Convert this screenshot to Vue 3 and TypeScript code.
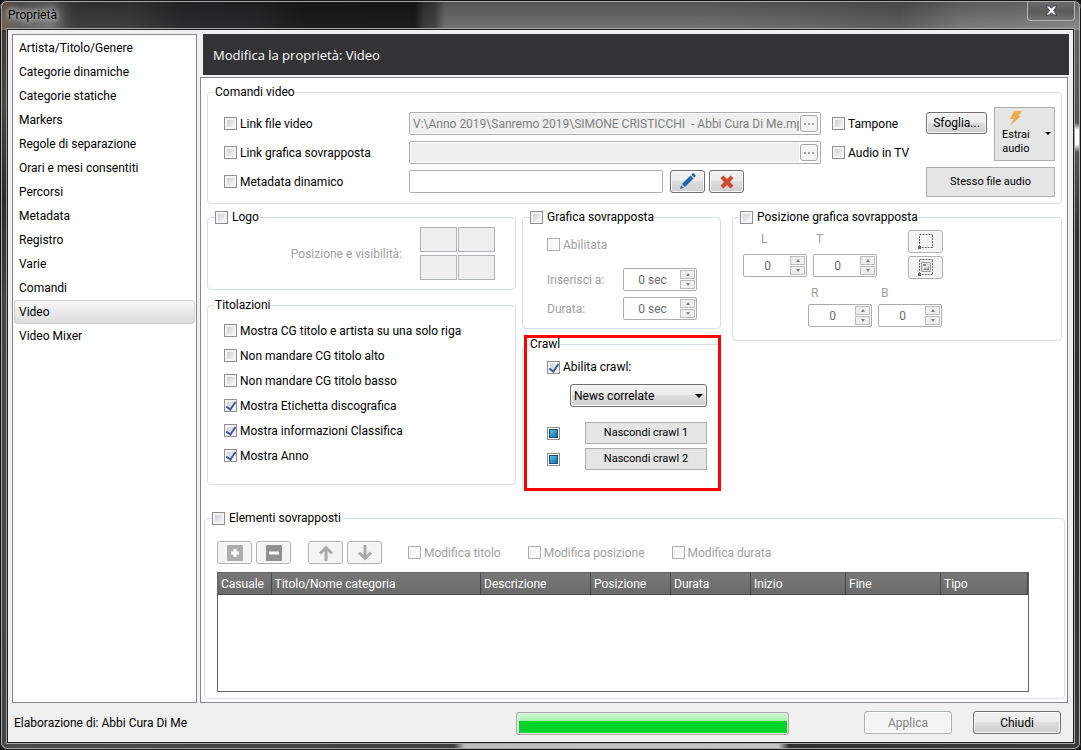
<script setup lang="ts">
import { ref } from 'vue'

const sections: string[] = [
  'Artista/Titolo/Genere',
  'Categorie dinamiche',
  'Categorie statiche',
  'Markers',
  'Regole di separazione',
  'Orari e mesi consentiti',
  'Percorsi',
  'Metadata',
  'Registro',
  'Varie',
  'Comandi',
  'Video',
  'Video Mixer',
]
const current = ref('Video')

const linkFile = ref(false)
const linkOverlay = ref(false)
const dynamicMetadata = ref(false)
const buffer = ref(false)
const tvAudio = ref(false)
const filePath = ref('V:\\Anno 2019\\Sanremo 2019\\SIMONE CRISTICCHI  - Abbi Cura Di Me.mp')
const overlayPath = ref('')
const metadataText = ref('')

interface Option {
  label: string
  on: boolean
}
const titling = ref<Option[]>([
  { label: 'Mostra CG titolo e artista su una solo riga', on: false },
  { label: 'Non mandare CG titolo alto', on: false },
  { label: 'Non mandare CG titolo basso', on: false },
  { label: 'Mostra Etichetta discografica', on: true },
  { label: 'Mostra informazioni Classifica', on: true },
  { label: 'Mostra Anno', on: true },
])

const timings: string[] = ['Inserisci a:', 'Durata:']
const topEdges: string[] = ['L', 'T']
const bottomEdges: string[] = ['R', 'B']
const corners: string[] = ['In alto a sinistra', 'In alto a destra', 'In basso a sinistra', 'In basso a destra']

const logo = ref(false)
const overlay = ref(false)
const overlayPosition = ref(false)
const overlayElements = ref(false)
const crawl = ref(true)
const crawlSource = ref('News correlate')

const columns: { label: string; key: string }[] = [
  { label: 'Casuale', key: 'random' },
  { label: 'Titolo/Nome categoria', key: 'title' },
  { label: 'Descrizione', key: 'description' },
  { label: 'Posizione', key: 'place' },
  { label: 'Durata', key: 'duration' },
  { label: 'Inizio', key: 'start' },
  { label: 'Fine', key: 'end' },
  { label: 'Tipo', key: 'type' },
]
</script>

<template>
  <div class="window">
    <header class="titlebar">
      <span class="caption">Proprietà</span>
      <button class="close" type="button" aria-label="Chiudi finestra">
        <svg width="13" height="11" viewBox="0 0 13 11">
          <path d="M1 1h3.6l1.9 2.3L8.400 1H12L8.500 5.500 12 10H8.400L6.500 7.700 4.600 10H1l3.500-4.500z" fill="#fff" stroke="#3c4150" stroke-width="1" />
        </svg>
      </button>
    </header>

    <div class="client">
      <div class="body">
        <nav class="sidebar" aria-label="Sezioni">
          <button
            v-for="s in sections"
            :key="s"
            type="button"
            class="section"
            :class="{ active: s === current }"
            @click="current = s"
          >{{ s }}</button>
        </nav>

        <main class="main">
          <h1 class="heading">Modifica la proprietà: Video</h1>

          <div class="panel">
            <fieldset class="group commands">
              <legend>Comandi video</legend>
              <div class="commands-grid">
                <div class="rows">
                  <div class="row">
                    <label class="check"><input v-model="linkFile" type="checkbox" />Link file video</label>
                    <div class="path">
                      <input v-model="filePath" type="text" disabled aria-label="Percorso file video" />
                      <button type="button" disabled aria-label="Scegli file video"><i></i><i></i><i></i></button>
                    </div>
                    <label class="check"><input v-model="buffer" type="checkbox" />Tampone</label>
                  </div>
                  <div class="row">
                    <label class="check"><input v-model="linkOverlay" type="checkbox" />Link grafica sovrapposta</label>
                    <div class="path">
                      <input v-model="overlayPath" type="text" disabled aria-label="Percorso grafica sovrapposta" />
                      <button type="button" disabled aria-label="Scegli grafica"><i></i><i></i><i></i></button>
                    </div>
                    <label class="check"><input v-model="tvAudio" type="checkbox" />Audio in TV</label>
                  </div>
                  <div class="row">
                    <label class="check"><input v-model="dynamicMetadata" type="checkbox" />Metadata dinamico</label>
                    <div class="metadata">
                      <input v-model="metadataText" class="field" type="text" aria-label="Metadata dinamico" />
                      <button class="btn icon" type="button" aria-label="Modifica">
                        <svg width="17" height="17" viewBox="0 0 17 17">
                          <path d="M1 16l1.200-4.200 3 3z" fill="#2468b4" />
                          <path d="M3 11L11.500 2.500l3 3L6 14z" fill="#1f63b0" />
                          <path d="M12.300 1.700L13.500.6q.8-.6 1.500 0l1.300 1.300q.6.8 0 1.500l-1.200 1.200z" fill="#2a5f9e" />
                          <path d="M2.600 12.200l2.300 2.300" stroke="#e8eef5" stroke-width=".8" />
                        </svg>
                      </button>
                      <button class="btn icon" type="button" aria-label="Elimina">
                        <svg width="14" height="14" viewBox="0 0 14 14">
                          <path d="M3.500.5L7 4 10.500.5l3 2.800L10 7l3.500 3.700-3 2.800L7 10l-3.500 3.500-3-2.800L4 7 .5 3.300z" fill="#cf4b30" />
                        </svg>
                      </button>
                    </div>
                  </div>
                </div>
                <div class="actions">
                  <button class="btn browse" type="button">Sfoglia...</button>
                  <button class="flat extract" type="button">
                    <span class="extract-text">
                      <svg width="14" height="15" viewBox="0 0 14 15">
                        <path d="M5 0h8L9.500 5H12L1 15l3.500-7H1z" fill="#e9ad4f" />
                      </svg>
                      Estrai<br />audio
                    </span>
                    <svg class="arrow" width="6" height="3" viewBox="0 0 6 3"><path d="M0 0h6L3 3z" fill="#000" /></svg>
                  </button>
                  <button class="flat same" type="button">Stesso file audio</button>
                </div>
              </div>
            </fieldset>

            <div class="columns">
              <div class="stack">
                <fieldset class="group">
                  <legend><label class="check"><input v-model="logo" type="checkbox" />Logo</label></legend>
                  <div class="logo">
                    <span class="muted">Posizione e visibilità:</span>
                    <div class="corners">
                      <button v-for="c in corners" :key="c" type="button" disabled :aria-label="c"></button>
                    </div>
                  </div>
                </fieldset>
                <fieldset class="group">
                  <legend>Titolazioni</legend>
                  <div class="titling">
                    <label v-for="t in titling" :key="t.label" class="check"><input v-model="t.on" type="checkbox" />{{ t.label }}</label>
                  </div>
                </fieldset>
              </div>

              <div class="stack">
                <fieldset class="group">
                  <legend><label class="check"><input v-model="overlay" type="checkbox" />Grafica sovrapposta</label></legend>
                  <div class="overlay">
                    <label class="check muted"><input type="checkbox" disabled />Abilitata</label>
                    <label v-for="t in timings" :key="t" class="timing muted">
                      {{ t }}
                      <span class="spin wide">
                        <input type="text" value="0 sec" disabled />
                        <span class="steps">
                          <button type="button" disabled aria-label="Aumenta"></button>
                          <button type="button" disabled aria-label="Diminuisci"></button>
                        </span>
                      </span>
                    </label>
                  </div>
                </fieldset>
                <fieldset class="group crawl">
                  <legend>Crawl</legend>
                  <div class="crawl-body">
                    <label class="check"><input v-model="crawl" type="checkbox" />Abilita crawl:</label>
                    <div class="select">
                      <select v-model="crawlSource" aria-label="Origine crawl">
                        <option>News correlate</option>
                      </select>
                    </div>
                    <div v-for="n in 2" :key="n" class="hide-row">
                      <input type="checkbox" :indeterminate.prop="true" :aria-label="`Crawl ${n}`" />
                      <button class="flat" type="button">Nascondi crawl {{ n }}</button>
                    </div>
                  </div>
                </fieldset>
              </div>

              <fieldset class="group position">
                <legend><label class="check"><input v-model="overlayPosition" type="checkbox" />Posizione grafica sovrapposta</label></legend>
                <div class="position-body">
                  <div class="edges">
                    <label v-for="e in topEdges" :key="e" class="edge muted" :class="{ left: e === 'L' }">
                      <span>{{ e }}</span>
                      <span class="spin">
                        <input type="text" value="0" disabled />
                        <span class="steps">
                          <button type="button" disabled aria-label="Aumenta"></button>
                          <button type="button" disabled aria-label="Diminuisci"></button>
                        </span>
                      </span>
                    </label>
                    <div class="areas">
                      <button class="btn icon" type="button" disabled aria-label="Disegna area">
                        <svg width="17" height="15" viewBox="0 0 17 15">
                          <path d="M2.500.5h13M15.500 1v13M15.500 13.500h-13M2.500 13V1" fill="none" stroke="#6f6f6f" stroke-dasharray="2 1" />
                          <path d="M1 12h3v3H1z" fill="#6f6f6f" />
                        </svg>
                      </button>
                      <button class="btn icon" type="button" disabled aria-label="Area da immagine">
                        <svg width="17" height="17" viewBox="0 0 17 17">
                          <path d="M2.500.5h13M15.500 1v15M15.500 15.500h-13M2.500 15V1" fill="none" stroke="#6f6f6f" stroke-dasharray="2 1" />
                          <path d="M1 14h3v3H1z" fill="#6f6f6f" />
                          <path d="M4.500 3.500h9v9h-9z" fill="#e3e3e3" stroke="#a0a0a0" />
                          <path d="M6 5h3v2H6zM6 11l2-2 2 1 2-3v4z" fill="#8b8b8b" />
                        </svg>
                      </button>
                    </div>
                  </div>
                  <div class="edges lower">
                    <label v-for="e in bottomEdges" :key="e" class="edge muted">
                      <span>{{ e }}</span>
                      <span class="spin">
                        <input type="text" value="0" disabled />
                        <span class="steps">
                          <button type="button" disabled aria-label="Aumenta"></button>
                          <button type="button" disabled aria-label="Diminuisci"></button>
                        </span>
                      </span>
                    </label>
                  </div>
                </div>
              </fieldset>
            </div>

            <fieldset class="group elements">
              <legend><label class="check"><input v-model="overlayElements" type="checkbox" />Elementi sovrapposti</label></legend>
              <div class="toolbar">
                <button class="btn icon" type="button" disabled aria-label="Aggiungi">
                  <svg width="16" height="16" viewBox="0 0 16 16">
                    <rect width="16" height="16" rx="1" fill="#adadad" /><path d="M8 4v8M4 8h8" stroke="#fff" stroke-width="3" />
                  </svg>
                </button>
                <button class="btn icon" type="button" disabled aria-label="Rimuovi">
                  <svg width="16" height="16" viewBox="0 0 16 16">
                    <rect width="16" height="16" rx="1" fill="#919191" /><path d="M3 8h10" stroke="#fff" stroke-width="3" />
                  </svg>
                </button>
                <button class="btn icon up" type="button" disabled aria-label="Sposta su">
                  <svg width="14" height="16" viewBox="0 0 14 16">
                    <path d="M7 16V2.500M1 8.500l6-6 6 6" fill="none" stroke="#a9a9a9" stroke-width="3" />
                  </svg>
                </button>
                <button class="btn icon" type="button" disabled aria-label="Sposta giù">
                  <svg width="14" height="16" viewBox="0 0 14 16">
                    <path d="M7 0v13.500M1 7.500l6 6 6-6" fill="none" stroke="#a9a9a9" stroke-width="3" />
                  </svg>
                </button>
                <div class="edit-flags">
                  <label class="check muted"><input type="checkbox" disabled />Modifica titolo</label>
                  <label class="check muted"><input type="checkbox" disabled />Modifica posizione</label>
                  <label class="check muted"><input type="checkbox" disabled />Modifica durata</label>
                </div>
              </div>
              <div class="list">
                <table>
                  <thead>
                    <tr><th v-for="c in columns" :key="c.key" :class="c.key" scope="col">{{ c.label }}</th></tr>
                  </thead>
                </table>
              </div>
            </fieldset>
          </div>
        </main>
      </div>

      <footer class="footer">
        <span class="status">Elaborazione di: Abbi Cura Di Me</span>
        <progress value="100" max="100" aria-label="Elaborazione"></progress>
        <button class="btn wide-btn" type="button" disabled>Applica</button>
        <button class="btn wide-btn" type="button">Chiudi</button>
      </footer>
    </div>
  </div>
</template>

<style>
body {
  margin: 0;
  background: #111;
}
</style>

<style scoped>
* {
  box-sizing: border-box;
}
.window {
  display: flex;
  flex-direction: column;
  min-height: 100vh;
  padding: 0 8px 8px;
  border-radius: 7px;
  font: 12px/16px Roboto, 'Open Sans', sans-serif;
  color: #000;
  background:
    linear-gradient(90deg, #4a4c4a 0, #3c3f3c 42%, #bdbdbd 43%, #c4c4c4 72%, #2f312f 73%, #3a3a3a) bottom / 100% 8px no-repeat,
    linear-gradient(#6a6a6a 0, #555 110px, #555 123px, #fff 130px, #fff 144px, #555 152px, #333 230px, #2c2c2c 60%, #3a3a3a) right / 8px 100% no-repeat,
    linear-gradient(#3a3230 0, #4a4646 100px, #2c2829 200px, #444 300px, #474545 60%, #444) left / 8px 100% no-repeat,
    #333;
  box-shadow: inset 0 0 0 1px #161616, inset 0 0 0 2px #a8a8a8;
}
.titlebar {
  display: flex;
  justify-content: space-between;
  align-items: flex-start;
  height: 30px;
  margin: 0 -8px;
  padding: 0 6px 0 8px;
  border-radius: 7px 7px 0 0;
  background:
    linear-gradient(rgba(0, 0, 0, .3), transparent),
    linear-gradient(90deg, #7c6553 0, #666 20px, #777 50px, #444 72px, #404141 80px, #3e3f3f 130px, #2c2e2f 180px, #28292a 260px, #1e1e1e 300px, #1c1c1c 415px, #3e3e40 424px, #454545 434px, #747474 445px, #747474 700px, #6c6c6c 800px, #606060 900px, #7c7c7c 960px, #8a8a8a);
  box-shadow: inset 0 1px #161616, inset 0 2px #a8a8a8, inset 1px 0 #161616, inset -1px 0 #161616, inset 2px 0 #a8a8a8, inset -2px 0 #a8a8a8;
}
.caption {
  padding-top: 7px;
  text-shadow: 0 0 4px #bbb, 0 0 6px #bbb, 0 0 8px #bbb, 0 0 10px #aaa;
}
.close {
  display: flex;
  align-items: center;
  justify-content: center;
  width: 48px;
  height: 19px;
  margin-top: 2px;
  padding: 0 0 2px;
  border: 1px solid #b4b4b4;
  border-top: 0;
  border-radius: 0 0 4px 4px;
  background: linear-gradient(#6b6b6b, #5a5a5a 50%, #707070);
}
.client {
  flex: 1;
  display: flex;
  flex-direction: column;
  padding-top: 4px;
  background: #f0f0f0;
  box-shadow: 0 0 0 1px #1c1c1c, 0 0 0 2px #a5a5a5;
}
.body {
  flex: 1;
  display: flex;
  gap: 3px;
  padding: 0 4px;
}
.sidebar {
  flex: none;
  width: 185px;
  padding: 1px;
  border: 1px solid #828790;
  background: #fff;
}
button,
input,
select {
  font: inherit;
  color: inherit;
}
.section {
  display: block;
  width: 100%;
  height: 24px;
  padding: 0 4px;
  border: 1px solid transparent;
  border-radius: 3px;
  background: none;
  text-align: left;
}
.section.active {
  border-color: #cfcfcf;
  background: linear-gradient(#f8f8f8, #dcdcdc);
}
.main {
  flex: 1;
  min-width: 0;
  display: flex;
  flex-direction: column;
}
.heading {
  height: 41px;
  margin: 0 0 2px 3px;
  padding: 0 10px;
  background: #333335;
  color: #fff;
  font-family: 'Open Sans', sans-serif;
  font-size: 13px;
  font-weight: 400;
  line-height: 43px;
}
.panel {
  flex: 1;
  margin-right: 1px;
  padding: 6px 2px 3px 3px;
  border: 1px solid #828790;
  background: #fff;
}
.group {
  min-width: 0;
  margin: 0;
  padding: 0 0 0 7px;
  border: 1px solid #d5dfe5;
  border-radius: 4px;
}
legend {
  height: 16px;
  padding: 0;
}
legend .check {
  gap: 4px;
}
.check {
  display: flex;
  align-items: center;
  gap: 3px;
  white-space: nowrap;
}
.muted {
  color: #a0a0a0;
}
input[type='checkbox'] {
  appearance: none;
  flex: none;
  width: 13px;
  height: 13px;
  margin: 0;
  border: 1px solid #8e8f8f;
  background: linear-gradient(135deg, #cbcfd5, #f6f6f6) content-box, #f4f4f4;
  padding: 2px;
}
input[type='checkbox']:disabled {
  border-color: #b1b1b1;
  background: #f9f9f9;
}
input[type='checkbox']:checked {
  position: relative;
}
input[type='checkbox']:checked::after {
  content: '';
  position: absolute;
  left: 3px;
  top: 0;
  width: 4px;
  height: 8px;
  border: solid #44589c;
  border-width: 0 2px 2px 0;
  transform: rotate(35deg);
}
input[type='checkbox']:indeterminate {
  background: linear-gradient(135deg, #5fc0e8, #0d6ea8) content-box, #fff;
  box-shadow: inset 0 0 0 1px #fff, inset 0 0 0 2px #1c4f78;
}
.commands {
  margin: 0 3px;
}
.commands-grid {
  display: grid;
  grid-template-columns: 1fr 130px;
  padding: 7px 5px 6px 9px;
}
.rows {
  display: grid;
  align-content: start;
  gap: 7px;
  padding-top: 5px;
}
.row {
  display: grid;
  grid-template-columns: 185px 1fr 94px;
  height: 22px;
}
.path {
  display: flex;
  align-items: center;
  height: 23px;
  margin-right: 11px;
  padding: 1px;
  border: 1px solid #abadb3;
  border-radius: 2px;
}
.path input {
  flex: 1;
  min-width: 0;
  height: 19px;
  padding: 0 0 0 2px;
  border: 0;
  background: #efefef;
  color: #808080;
}
.path button {
  display: flex;
  align-items: center;
  justify-content: center;
  gap: 2px;
  width: 18px;
  height: 17px;
  margin: 0 1px;
  padding: 0;
  border: 1px solid #a8a8a8;
  border-radius: 3px;
  background: #f4f4f4;
}
.path i {
  width: 2px;
  height: 2px;
  background: #a0a0a0;
}
.metadata {
  display: flex;
  gap: 4px;
}
.field {
  flex: 1;
  min-width: 0;
  height: 23px;
  margin-right: 3px;
  border: 1px solid #abadb3;
  border-radius: 2px;
}
.metadata::after {
  content: '';
  width: 84px;
}
.btn {
  height: 23px;
  padding: 0;
  border: 1px solid #707070;
  border-radius: 3px;
  background: linear-gradient(#f2f2f2 0, #ebebeb 48%, #dddddd 50%, #cfcfcf);
  box-shadow: inset 0 0 0 1px #fafafa;
}
.btn:disabled {
  border-color: #adb2b5;
  background: #f4f4f4;
  color: #838383;
}
.icon {
  flex: none;
  display: flex;
  align-items: center;
  justify-content: center;
  width: 35px;
}
.actions {
  display: grid;
  grid-template-columns: 61px 61px;
  gap: 6px 7px;
}
.browse {
  height: 22px;
  margin-top: 5px;
}
.flat {
  padding: 0;
  border: 1px solid #adadad;
  background: #e5e5e5;
  font-size: 11px;
}
.extract {
  display: flex;
  align-items: center;
  justify-content: space-between;
  height: 54px;
  padding: 0 3px 2px 7px;
  line-height: 14px;
}
.extract-text svg {
  display: block;
  margin: 0 auto 2px;
}
.same {
  grid-column: 1 / 3;
  height: 30px;
}
.columns {
  display: grid;
  grid-template-columns: 309px 199px 1fr;
  align-items: start;
  margin: 5px 3px 0;
}
.stack {
  display: grid;
  gap: 7px;
}
.stack + .stack {
  margin-left: 6px;
  margin-right: -6px;
}
.position {
  margin-left: 17px;
}
.logo {
  display: flex;
  align-items: center;
  justify-content: flex-end;
  gap: 18px;
  padding: 2px 20px 9px 0;
}
.corners {
  display: grid;
  grid-template-columns: 37px 37px;
  gap: 3px 1px;
}
.corners button {
  height: 25px;
  padding: 0;
  border: 1px solid #adb2b5;
  background: #efefef;
}
.titling {
  display: grid;
  grid-auto-rows: 25px;
  padding: 5px 9px 16px;
}
.overlay {
  display: grid;
  gap: 6px;
  padding: 11px 23px 8px 17px;
}
.overlay > .check {
  height: 17px;
  margin-bottom: 9px;
}
.timing {
  display: flex;
  align-items: center;
  justify-content: space-between;
}
.spin {
  display: flex;
  align-items: center;
  width: 64px;
  height: 23px;
  padding: 1px;
  border: 1px solid #abadb3;
  border-radius: 2px;
}
.spin.wide {
  width: 74px;
}
.spin input {
  flex: 1;
  min-width: 0;
  padding: 0;
  border: 0;
  background: none;
  color: #6d6d6d;
  text-align: center;
}
.steps {
  display: grid;
  gap: 1px;
}
.steps button {
  display: flex;
  align-items: center;
  justify-content: center;
  width: 15px;
  height: 9px;
  padding: 0;
  border: 1px solid #bcbcbc;
  background: #efefef;
}
.steps button::before {
  content: '';
  border: 2px solid transparent;
  border-top: 0;
  border-bottom: 3px solid #808080;
}
.steps button + button::before {
  transform: rotate(180deg);
}
.crawl {
  position: relative;
}
.crawl::after {
  content: '';
  position: absolute;
  inset: -17px -1px -1px 1px;
  border: 3px solid #f00;
  pointer-events: none;
}
.crawl-body {
  padding: 7px 13px 20px 17px;
}
.select {
  position: relative;
  margin: 9px 0 15px 23px;
}
.select select {
  display: block;
  width: 100%;
  height: 23px;
  padding: 0 3px;
  appearance: none;
  border: 1px solid #707070;
  border-radius: 3px;
  background: linear-gradient(#f2f2f2 0, #ebebeb 48%, #dddddd 50%, #cfcfcf);
  box-shadow: inset 0 0 0 1px #fafafa;
}
.select::after {
  content: '';
  position: absolute;
  right: 4px;
  top: 10px;
  border: 4px solid transparent;
  border-top-color: #000;
  border-bottom: 0;
}
.hide-row {
  display: flex;
  align-items: center;
  justify-content: space-between;
}
.hide-row + .hide-row {
  margin-top: 4px;
}
.hide-row .flat {
  width: 122px;
  height: 22px;
}
.position-body {
  padding: 5px 0 13px 3px;
}
.edges {
  display: flex;
  gap: 6px;
}
.edge span:first-child {
  display: block;
  height: 24px;
  padding: 1px 0 0 3px;
}
.edge.left span:first-child {
  padding-left: 18px;
}
.edge .spin {
  display: flex;
}
.areas {
  display: grid;
  gap: 3px;
  margin-left: 25px;
}
.lower {
  margin-left: 65px;
}
.lower .edge span:first-child {
  height: 25px;
  padding-top: 6px;
}
.elements {
  margin-top: 19px;
}
.toolbar {
  display: flex;
  gap: 4px;
  padding: 15px 0 8px 5px;
}
.up {
  margin-left: 13px;
}
.edit-flags {
  display: flex;
  gap: 27px;
  margin-left: 22px;
}
.list {
  height: 120px;
  margin: 0 35px 6px 5px;
  border: 1px solid #646464;
}
table {
  width: 100%;
  border-collapse: collapse;
  table-layout: fixed;
}
th {
  height: 21px;
  padding: 1px 2px 0 3px;
  border-right: 1px solid #484848;
  border-bottom: 1px solid #484848;
  background: linear-gradient(#787878, #6a6a6a);
  color: #fff;
  font-weight: 400;
  text-align: left;
}
.random {
  width: 53px;
}
.description {
  width: 110px;
}
.place,
.duration {
  width: 80px;
}
.start,
.end {
  width: 95px;
}
.type {
  width: 87px;
}
.footer {
  display: flex;
  align-items: center;
  height: 39px;
  padding: 0 12px 0 6px;
}
.status {
  flex: 1;
}
progress {
  appearance: none;
  width: 273px;
  height: 23px;
  margin: 2px 75px 0 0;
  padding: 1px 1px 1px 2px;
  border: 1px solid #a8a8a8;
  border-radius: 3px;
  background: #e6e6e6;
}
progress::-webkit-progress-bar {
  background: #e6e6e6;
}
progress::-webkit-progress-value {
  background: linear-gradient(#ccfbcf 0, #a5efac 35%, #00d328 36%, #00d328 90%, #19dd3c);
}
.wide-btn {
  width: 88px;
}
.wide-btn + .wide-btn {
  margin-left: 21px;
}
</style>
